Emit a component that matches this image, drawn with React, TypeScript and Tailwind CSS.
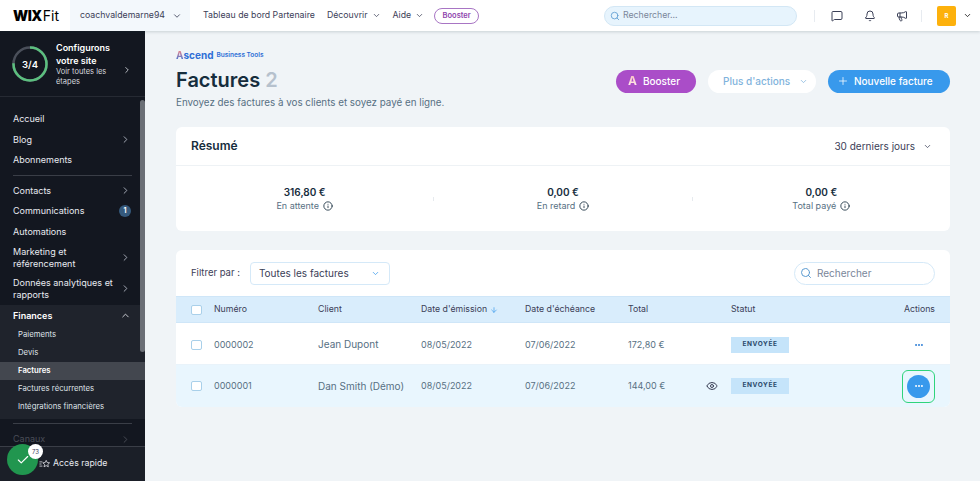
import { ArrowDown, Bell, Check, ChevronDown, ChevronRight, ChevronUp, Eye, Info, Megaphone, MessageSquare, MoreHorizontal, Plus, Search } from "lucide-react";

const font = "font-['Inter','Noto_Sans',sans-serif]";
const cols = "grid grid-cols-[23px_104px_103px_104px_103px_103px_1fr_auto] items-center pl-[15px] pr-[15px]";

const NavItem = ({ label, arrow, badge, two }: { label: string; arrow?: boolean; badge?: string; two?: boolean }) => (
  <div className={`flex items-center justify-between pl-[13px] pr-[14px] text-[9px] leading-[12px] text-[#e8eaf0] ${two ? "h-[31px]" : "h-[20.5px]"}`}>
    <span className={two ? "w-[108px]" : ""}>{label}</span>
    {arrow && <ChevronRight size={11} className="shrink-0 text-[#aeb4c0]" />}
    {badge && (
      <span className="flex h-[12px] w-[12px] items-center justify-center rounded-full bg-[#35597c] text-[7px] font-bold text-white">{badge}</span>
    )}
  </div>
);

const SubItem = ({ label, active }: { label: string; active?: boolean }) => (
  <div className={`flex h-[18px] items-center pl-[18px] text-[7.75px] text-[#dfe2e8] ${active ? "bg-[#43474f] font-semibold text-white" : ""}`}>{label}</div>
);

const Sidebar = () => (
  <aside className="flex h-full w-[145px] shrink-0 flex-col bg-[#131720]">
    <div className="flex h-[66px] shrink-0 items-center border-b border-[#262a33] pl-[11px] pr-[13px]">
      <svg width="38" height="38" viewBox="0 0 38 38" className="shrink-0">
        <circle cx="19" cy="19" r="16.5" fill="none" stroke="#4a4f5a" strokeWidth="2.5" />
        <circle cx="19" cy="19" r="16.5" fill="none" stroke="#5cbf7f" strokeWidth="2.5" strokeDasharray="78 104" transform="rotate(-90 19 19)" />
        <text x="19" y="22.5" textAnchor="middle" fontSize="9.5" fill="#fff" fontWeight="600">3/4</text>
      </svg>
      <div className="ml-[7px] flex-1">
        <div className="text-[9px] font-semibold leading-[13px] text-white">Configurons votre site</div>
        <div className="text-[7.5px] leading-[10px] text-[#d5d8de]">Voir toutes les étapes</div>
      </div>
      <ChevronRight size={10} className="mt-[12px] shrink-0 text-[#d5d8de]" />
    </div>
    <div className="relative flex-1 overflow-hidden pt-[12px]">
      <NavItem label="Accueil" />
      <NavItem label="Blog" arrow />
      <NavItem label="Abonnements" />
      <div className="mx-[13px] mb-[5px] mt-[4px] h-px bg-[#3a3e47]" />
      <NavItem label="Contacts" arrow />
      <NavItem label="Communications" badge="1" />
      <NavItem label="Automations" />
      <NavItem label="Marketing et référencement" arrow two />
      <NavItem label="Données analytiques et rapports" arrow two />
      <div className="mt-[1px] bg-[#1f232c] pb-[3px]">
        <div className="flex h-[21px] items-center justify-between pl-[13px] pr-[14px] text-[9px] font-semibold text-white">
          Finances
          <ChevronUp size={11} className="text-[#d5d8de]" />
        </div>
        <SubItem label="Paiements" />
        <SubItem label="Devis" />
        <SubItem label="Factures" active />
        <SubItem label="Factures récurrentes" />
        <SubItem label="Intégrations financières" />
      </div>
      <div className="mx-[13px] mb-[9px] mt-[4px] h-px bg-[#3a3e47]" />
      <div className="flex h-[12px] items-center justify-between pl-[13px] pr-[14px] text-[9px] leading-[12px] text-[#4a4e58]">
        Canaux
        <ChevronRight size={11} />
      </div>
      <div className="absolute right-0 top-[3px] h-[252px] w-[5px] rounded-full bg-[#6b6f76]" />
    </div>
    <div className="flex h-[35px] shrink-0 items-center gap-[3px] border-t border-[#3a3e47] bg-[#1b1f28] pl-[39px] text-[8.75px] text-[#e8eaf0]">
      <svg width="11" height="10" viewBox="0 0 13 11" fill="none" stroke="#e8eaf0" strokeWidth="0.9">
        <path d="M0.5 3h3.5M0.5 5.5h2.5M0.5 8h3.5" />
        <path d="M8.5 1.2l1.2 2.6 2.8.3-2.1 1.9.6 2.8-2.5-1.4-2.5 1.4.6-2.8-2.1-1.9 2.8-.3z" />
      </svg>
      Accès rapide
    </div>
  </aside>
);

const TopBar = () => (
  <header className="relative z-10 flex h-[31px] shrink-0 items-center bg-white text-[8.75px] text-[#3b4057] shadow-[0_1px_3px_rgba(22,45,61,0.18)]">
    <div className="flex w-[70px] items-baseline pl-[13px] text-[14px] leading-none text-black">
      <span className="font-black tracking-[-0.5px]">WIX</span>
      <span className="ml-[1px]">Fit</span>
    </div>
    <div className="flex h-full w-[120px] items-center justify-between bg-[#f3f8fc] pl-[10px] pr-[8px]">
      coachvaldemarne94
      <ChevronDown size={10} />
    </div>
    <div className="ml-[13px] flex items-center">
      <span className="whitespace-nowrap">Tableau de bord Partenaire</span>
      <span className="ml-[12px]">Découvrir</span>
      <ChevronDown size={9} className="ml-[4px]" />
      <span className="ml-[12px]">Aide</span>
      <ChevronDown size={9} className="ml-[4px]" />
      <span className="ml-[10px] flex h-[16px] w-[45px] items-center justify-center rounded-full border border-[#a875c4] text-[7.5px] font-semibold text-[#8e44ad]">Booster</span>
    </div>
    <div className="ml-auto flex items-center pr-[8px]">
      <div className="flex h-[20px] w-[193px] items-center gap-[3px] rounded-full border border-[#d3e7f5] bg-[#e7f4fd] pl-[5px] text-[#7a869a]">
        <Search size={10} className="text-[#5b9bd1]" />
        Rechercher...
      </div>
      <div className="ml-[17px] h-[12px] w-px bg-[#e7ebf0]" />
      <MessageSquare size={12} className="ml-[16px]" />
      <Bell size={12} className="ml-[21px]" />
      <Megaphone size={12} className="ml-[20px]" />
      <div className="ml-[13px] h-[12px] w-px bg-[#e7ebf0]" />
      <div className="ml-[15px] flex h-[20px] w-[19px] items-center justify-center rounded-[2px] bg-[#fdb10c] text-[6px] font-bold text-white">R</div>
      <ChevronDown size={9} className="ml-[7px] text-black" />
    </div>
  </header>
);

const Stat = ({ value, label }: { value: string; label: string }) => (
  <div className="flex flex-1 flex-col items-center">
    <div className="text-[10px] font-semibold leading-[14px] text-[#162d3d]">{value}</div>
    <div className="flex items-center gap-[4px] text-[9px] leading-[14px] text-[#577083]">
      {label}
      <Info size={10} className="text-[#162d3d]" />
    </div>
  </div>
);

const Badge = () => (
  <span className="flex h-[16px] w-[58px] items-center justify-center bg-[#c5e4fa] text-[6.5px] font-bold tracking-[0.6px] text-[#2b4a6b]">ENVOYÉE</span>
);

const Checkbox = () => <span className="h-[10px] w-[11px] rounded-[2px] border border-[#a9d0ea] bg-white" />;

const Row = ({ num, client, total, hover }: { num: string; client: string; total: string; hover?: boolean }) => (
  <div className={`${cols} h-[42px] text-[9px] text-[#577083] ${hover ? "rounded-b-[6px] bg-[#e9f6fe]" : "border-b border-[#e9f3fa] pt-[2px]"}`}>
    <Checkbox />
    <span>{num}</span>
    <span className="whitespace-nowrap text-[10px]">{client}</span>
    <span>08/05/2022</span>
    <span>07/06/2022</span>
    <div className="flex items-center justify-between pr-[13px]">
      {total}
      {hover && <Eye size={12} className="text-[#3b4057]" />}
    </div>
    <Badge />
    {hover ? (
      <div className="flex h-[33px] w-[33px] items-center justify-center rounded-[6px] border-[1.5px] border-[#2fd47c]">
        <span className="flex h-[23px] w-[23px] items-center justify-center rounded-full bg-[#3899ec] text-white">
          <MoreHorizontal size={10} strokeWidth={3} />
        </span>
      </div>
    ) : (
      <div className="flex w-[33px] justify-center text-[#2f7fd6]">
        <MoreHorizontal size={10} strokeWidth={3} />
      </div>
    )}
  </div>
);

const Main = () => (
  <main className="flex-1 overflow-hidden bg-[#f0f4f7] pl-[31px] pr-[30px] pt-[19px]">
    <div className="flex h-[10px] items-center text-[10px] font-bold leading-none">
      <span className="bg-gradient-to-b from-[#f47c7c] to-[#2f6fd6] bg-clip-text text-transparent">A</span>
      <span className="text-[#2f6fd6]">scend</span>
      <span className="ml-[3px] text-[6.5px] font-semibold text-[#2f6fd6]">Business Tools</span>
    </div>
    <div className="mt-[6px] flex items-center justify-between">
      <h1 className="text-[20px] font-semibold leading-[28px] text-[#162d3d]">
        Factures <span className="text-[#b6c1cd]">2</span>
      </h1>
      <div className="mt-[2px] flex items-center text-[10px] font-medium">
        <button className="flex h-[23px] w-[80px] items-center gap-[6px] rounded-full bg-[#aa4dc8] pl-[12px] text-white">
          <span className="bg-gradient-to-b from-[#f7b5b5] to-white bg-clip-text text-[12px] font-bold text-transparent">A</span>
          Booster
        </button>
        <button className="ml-[12px] flex h-[23px] w-[108px] items-center gap-[9px] rounded-full bg-white pl-[15px] text-[#7fb3dc]">
          Plus d'actions
          <ChevronDown size={9} />
        </button>
        <button className="ml-[12px] flex h-[23px] w-[122px] items-center gap-[5px] rounded-full bg-[#3899ec] pl-[9px] text-white">
          <Plus size={12} strokeWidth={1.5} />
          Nouvelle facture
        </button>
      </div>
    </div>
    <p className="mt-[2px] text-[9.8px] leading-[14px] text-[#577083]">Envoyez des factures à vos clients et soyez payé en ligne.</p>

    <section className="mt-[17px] h-[104px] rounded-[6px] bg-white">
      <div className="flex h-[39px] items-center justify-between border-b border-[#eef2f5] pl-[15px] pr-[18px]">
        <h2 className="text-[12px] font-semibold text-[#162d3d]">Résumé</h2>
        <div className="flex items-center gap-[8px] text-[10px] text-[#3b4057]">
          30 derniers jours
          <ChevronDown size={9} />
        </div>
      </div>
      <div className="flex h-[65px] items-center">
        <Stat value="316,80 €" label="En attente" />
        <div className="h-[4px] w-px bg-[#e6eaee]" />
        <Stat value="0,00 €" label="En retard" />
        <div className="h-[4px] w-px bg-[#e6eaee]" />
        <Stat value="0,00 €" label="Total payé" />
      </div>
    </section>

    <section className="mt-[19px] rounded-[6px] bg-white">
      <div className="flex h-[46px] items-center justify-between pl-[15px] pr-[15px]">
        <div className="flex items-center gap-[10px] text-[9.5px] text-[#3b4057]">
          Filtrer par :
          <div className="flex h-[23px] w-[140px] items-center justify-between rounded-[4px] border border-[#d5e9f8] pl-[8px] pr-[9px] text-[10px]">
            Toutes les factures
            <ChevronDown size={9} className="text-[#3899ec]" />
          </div>
        </div>
        <div className="flex h-[23px] w-[141px] items-center gap-[5px] rounded-full border border-[#d5e9f8] pl-[5px] text-[10px] text-[#7a869a]">
          <Search size={12} className="text-[#5b9bd1]" />
          Rechercher
        </div>
      </div>
      <div className={`${cols} h-[27px] border-y border-[#cfe6f8] bg-[#d9edfc] text-[8.75px] text-[#3b4057]`}>
        <Checkbox />
        <span>Numéro</span>
        <span>Client</span>
        <span className="flex items-center gap-[3px]">
          Date d'émission
          <ArrowDown size={8} className="text-[#3899ec]" />
        </span>
        <span>Date d'échéance</span>
        <span>Total</span>
        <span>Statut</span>
        <span className="w-[33px] whitespace-nowrap text-right">Actions</span>
      </div>
      <Row num="0000002" client="Jean Dupont" total="172,80 €" />
      <Row num="0000001" client="Dan Smith (Démo)" total="144,00 €" hover />
    </section>
  </main>
);

export default function App() {
  return (
    <div className={`${font} relative flex h-[481px] w-[980px] flex-col overflow-hidden`}>
      <TopBar />
      <div className="flex min-h-0 flex-1">
        <Sidebar />
        <Main />
      </div>
      {/* quick access badge */}
      <div className="absolute left-[7px] top-[444px] flex h-[31px] w-[31px] items-center justify-center rounded-full bg-[#21964f] text-white">
        <Check size={14} />
      </div>
      <div className="absolute left-[28px] top-[444px] flex h-[15px] w-[15px] items-center justify-center rounded-full bg-white text-[6px] text-[#3b4057]">73</div>
    </div>
  );
}
